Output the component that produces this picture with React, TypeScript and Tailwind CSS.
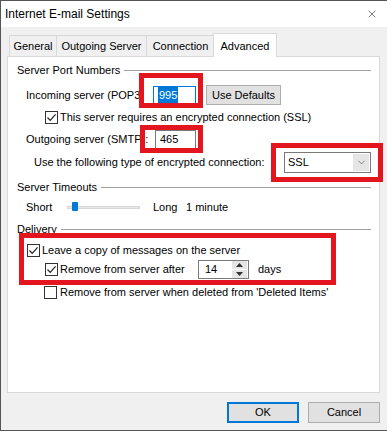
import { ChevronDown, X } from "lucide-react";

const Check = ({ checked }: { checked: boolean }) => (
  <span className="flex h-[13px] w-[13px] shrink-0 items-center justify-center border border-[#333333] bg-white">
    {checked && (
      <svg width="11" height="11" viewBox="0 0 11 11">
        <path d="M1.5 5.5 L4.2 8.3 L9.6 2.4" fill="none" stroke="#222222" strokeWidth="1.2" />
      </svg>
    )}
  </span>
);

const Header = ({ label }: { label: string }) => (
  <div className="flex h-[18px] items-center gap-[4px]">
    <span>{label}</span>
    <span className="h-px flex-1 bg-[#a0a0a0]" />
  </div>
);

const App = () => {
  return (
    <div className="relative flex h-[431px] w-[387px] flex-col whitespace-nowrap border-b border-l border-t border-[#555555] bg-[#f0f0f0] font-['Liberation_Sans',Arial,sans-serif] text-[11px] text-black">
      {/* title bar */}
      <div className="flex h-[26px] items-center justify-between bg-white pl-[4px] pr-[9px] text-[12px]">
        <span>Internet E-mail Settings</span>
        <X className="h-[12px] w-[12px] text-[#222222]" strokeWidth={1.2} />
      </div>

      {/* tabs */}
      <div className="relative z-10 flex h-[30px] items-end pl-[8px] pt-[6px]">
        <div className="mb-[1px] flex h-[21px] w-[48px] items-center justify-center border border-b-0 border-[#d9d9d9]">General</div>
        <div className="mb-[1px] flex h-[21px] w-[90px] items-center justify-center border border-b-0 border-l-0 border-[#d9d9d9]">Outgoing Server</div>
        <div className="mb-[1px] flex h-[21px] w-[68px] items-center justify-center border border-b-0 border-l-0 border-[#d9d9d9]">Connection</div>
        <div className="-ml-[2px] flex h-[24px] w-[64px] items-start justify-center border border-b-0 border-[#d9d9d9] bg-white pt-[4px]">Advanced</div>
      </div>

      {/* panel */}
      <div className="-mt-[1px] ml-[6px] flex h-[337px] w-[373px] flex-col border border-[#d9d9d9] bg-white pl-[9px] pr-[8px] pt-[4px]">
        <Header label="Server Port Numbers" />

        <div className="mt-[5px] flex h-[22px] items-center">
          <span className="ml-[9px] w-[127px]">Incoming server (POP3)</span>
          <div className="flex h-[19px] w-[43px] items-center border border-[#0078d7] pl-[4px]">
            <span className="bg-[#0078d7] px-px text-white">995</span>
          </div>
          <div className="ml-[10px] flex h-[20px] w-[75px] items-center justify-center border border-[#adadad] bg-[#e1e1e1]">Use Defaults</div>
        </div>

        <div className="flex h-[22px] items-center">
          <span className="ml-[28px]"><Check checked /></span>
          <span className="ml-[2px]">This server requires an encrypted connection (SSL)</span>
        </div>

        <div className="flex h-[22px] items-center">
          <span className="ml-[9px] w-[129px]">Outgoing server (SMTP):</span>
          <div className="flex h-[19px] w-[41px] items-center border border-[#7a7a7a] pl-[4px]">465</div>
        </div>

        <div className="flex h-[24px] items-center">
          <span className="ml-[17px]">Use the following type of encrypted connection:</span>
          <div className="ml-auto flex h-[21px] w-[87px] items-center border border-[#7a7a7a] bg-white pl-[3px]">
            <span className="flex-1">SSL</span>
            <span className="mr-[1px] flex h-[17px] w-[16px] items-center justify-center bg-[#e5e5e5]">
              <ChevronDown className="h-[11px] w-[11px] text-[#444444]" strokeWidth={1.3} />
            </span>
          </div>
        </div>

        <div className="mt-[4px]">
          <Header label="Server Timeouts" />
        </div>

        <div className="flex h-[22px] items-center">
          <span className="ml-[9px] w-[41px]">Short</span>
          <div className="relative flex h-[12px] w-[73px] items-center">
            <span className="h-[3px] w-full border border-[#d6d6d6] bg-[#e7e7e7]" />
            <span className="absolute left-[5px] top-[1px] h-[9px] w-[6px] rounded-[1px] bg-[#0078d7]" />
          </div>
          <span className="ml-[13px] w-[33px]">Long</span>
          <span>1 minute</span>
        </div>

        <div className="mt-[2px]">
          <Header label="Delivery" />
        </div>

        <div className="mt-[2px] flex h-[20px] items-center">
          <span className="ml-[10px]"><Check checked /></span>
          <span className="ml-[2px]">Leave a copy of messages on the server</span>
        </div>

        <div className="flex h-[19px] items-center">
          <span className="ml-[28px]"><Check checked /></span>
          <span className="ml-[2px] w-[138px]">Remove from server after</span>
          <div className="flex h-[19px] w-[51px] items-center border border-[#7a7a7a] bg-white">
            <span className="flex-1 pl-[6px]">14</span>
            <span className="mr-px flex h-[17px] w-[15px] flex-col gap-px">
              <span className="flex flex-1 items-center justify-center bg-[#e5e5e5]">
                <svg width="7" height="4" viewBox="0 0 7 4"><path d="M0 4 L3.5 0 L7 4Z" fill="#333333" /></svg>
              </span>
              <span className="flex flex-1 items-center justify-center bg-[#e5e5e5]">
                <svg width="7" height="4" viewBox="0 0 7 4"><path d="M0 0 L3.5 4 L7 0Z" fill="#333333" /></svg>
              </span>
            </span>
          </div>
          <span className="ml-[9px]">days</span>
        </div>

        <div className="mt-[4px] flex h-[18px] items-center">
          <span className="ml-[27px]"><Check checked={false} /></span>
          <span className="ml-[3px]">Remove from server when deleted from 'Deleted Items'</span>
        </div>
      </div>

      {/* buttons */}
      <div className="mt-[9px] flex justify-end gap-[9px] pr-[7px]">
        <div className="flex h-[21px] w-[72px] items-center justify-center border-2 border-[#0078d7] bg-[#e1e1e1]">OK</div>
        <div className="flex h-[21px] w-[72px] items-center justify-center border border-[#adadad] bg-[#e1e1e1]">Cancel</div>
      </div>

      {/* annotation overlays */}
      <div className="pointer-events-none absolute left-[138px] top-[72px] h-[35px] w-[64px] border-[5px] border-[#e3161f]" />
      <div className="pointer-events-none absolute left-[139px] top-[124px] h-[28px] w-[63px] border-[5px] border-[#e3161f]" />
      <div className="pointer-events-none absolute left-[270px] top-[142px] h-[39px] w-[112px] border-[5px] border-[#e3161f]" />
      <div className="pointer-events-none absolute left-[18px] top-[232px] h-[52px] w-[317px] border-[5px] border-[#e3161f]" />
    </div>
  );
};

export default App;
